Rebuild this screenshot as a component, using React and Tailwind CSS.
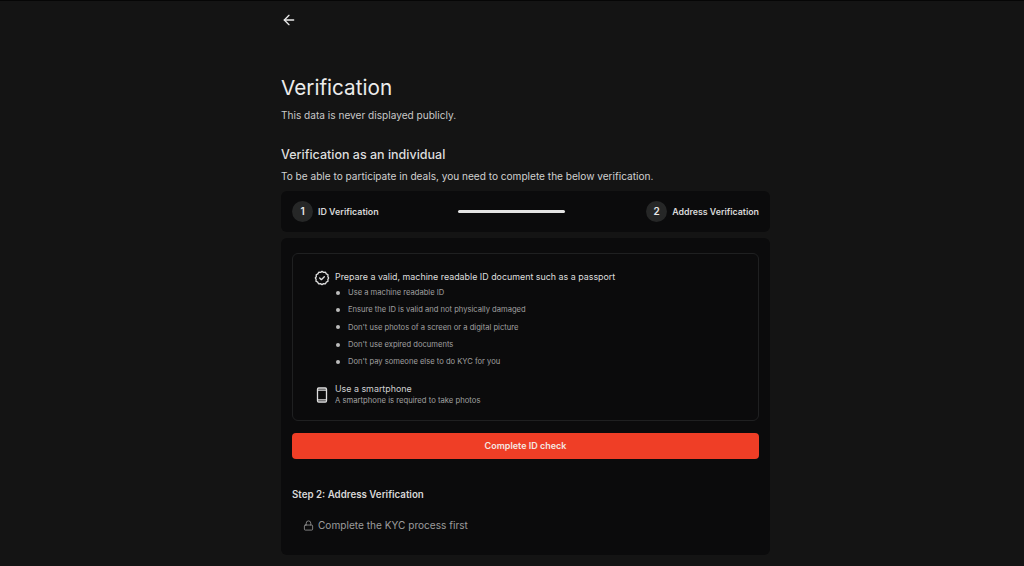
import { ArrowLeft, Lock } from 'lucide-react';

const tips = [
  'Use a machine readable ID',
  'Ensure the ID is valid and not physically damaged',
  "Don't use photos of a screen or a digital picture",
  "Don't use expired documents",
  "Don't pay someone else to do KYC for you",
];

function BadgeCheck() {
  return (
    <svg width="16" height="16" viewBox="0 0 24 24" fill="none" stroke="currentColor" strokeWidth="2" strokeLinecap="round" strokeLinejoin="round" className="shrink-0">
      <path d="M12 2l2.400 1.500 2.800-.2 1.300 2.500 2.500 1.300-.2 2.800L22 12l-1.200 2.100.2 2.800-2.500 1.300-1.300 2.500-2.800-.2L12 22l-2.400-1.500-2.800.2-1.300-2.500-2.500-1.300.2-2.800L2 12l1.500-2.100-.2-2.800 2.500-1.300 1.300-2.500 2.800.2z" />
      <path d="M8.500 12l2.500 2.500 4.500-4.500" />
    </svg>
  );
}

function Phone() {
  return (
    <svg width="16" height="16" viewBox="0 0 16 16" fill="none" stroke="currentColor" className="shrink-0 text-[#dedede]">
      <rect x="3.500" y="1" width="9" height="14" rx="1.200" strokeWidth="1.300" />
      <path d="M3.500 3.200h9M3.500 12.800h9" strokeWidth="1.300" />
    </svg>
  );
}

function StepLabel({ n, label, size }) {
  return (
    <div className="flex items-center gap-[5px]">
      <div className="w-[21px] h-[21px] rounded-full bg-[#262727] flex items-center justify-center text-[10px] font-semibold text-[#e8e8e8]">
        {n}
      </div>
      <span className={`${size} font-semibold text-[#d8d8d8]`}>{label}</span>
    </div>
  );
}

export default function App() {
  return (
    <div className="h-[566px] overflow-hidden bg-[#141414] font-['Inter',sans-serif]">
      <div className="h-px bg-[#060606]" />
      <div className="w-[489px] ml-[281px] pt-[11px]">
        <ArrowLeft size={16} strokeWidth={2} className="text-[#e8e8e8]" />

        <h1 className="mt-[46px] text-[20.700px] leading-[28px] text-[#ececec]">Verification</h1>
        <p className="mt-[5px] text-[10.100px] leading-[16px] text-[#c8c8c8]">This data is never displayed publicly.</p>

        <h2 className="mt-[23px] text-[12.500px] leading-[18px] font-medium text-[#dedede]">Verification as an individual</h2>
        <p className="mt-[4px] text-[10.080px] leading-[16px] text-[#d0d0d0]">
          To be able to participate in deals, you need to complete the below verification.
        </p>

        <div className="mt-[7px] h-[41px] rounded-md bg-[#0b0b0c] flex items-center justify-between px-[11px]">
          <StepLabel n="1" label="ID Verification" size="text-[8.900px]" />
          <div className="w-[107px] h-[3px] rounded-full bg-[#e4e4e4] mr-[2px]" />
          <StepLabel n="2" label="Address Verification" size="text-[8.800px]" />
        </div>

        <div className="mt-[6px] h-[317px] rounded-md bg-[#0b0b0c] px-[11px] pt-[15px]">
          <div className="h-[168px] rounded-md border border-[#1f2021] pl-[21px] pt-[16px]">
            <div className="flex items-start gap-[5px] text-[#dedede]">
              <BadgeCheck />
              <div>
                <p className="text-[8.900px] leading-[14px]">Prepare a valid, machine readable ID document such as a passport</p>
                <ul>
                  {tips.map(tip => (
                    <li key={tip} className="flex items-center h-[17.300px] text-[7.600px] text-[#a0a0a0]">
                      <span className="w-[4px] h-[4px] rounded-full bg-[#bdbdbd] ml-[1px] mr-[8px]" />
                      {tip}
                    </li>
                  ))}
                </ul>
              </div>
            </div>
            <div className="flex items-center gap-[5px] mt-[13px]">
              <Phone />
              <div>
                <p className="text-[8.900px] leading-[12px] text-[#d0d0d0]">Use a smartphone</p>
                <p className="text-[7.700px] leading-[12px] text-[#a0a0a0]">A smartphone is required to take photos</p>
              </div>
            </div>
          </div>

          <button className="mt-[12px] w-full h-[26px] rounded-[4px] bg-[#ef3e26] text-[9px] font-semibold text-[#f4e6e2]">
            Complete ID check
          </button>

          <h3 className="mt-[28px] text-[9.750px] leading-[16px] font-semibold text-[#d8d8d8]">Step 2: Address Verification</h3>

          <div className="mt-[14px] ml-[11px] flex items-center gap-[4px] text-[#9c9c9c]">
            <Lock size={11} strokeWidth={1.75} />
            <span className="text-[10.100px] leading-[16px]">Complete the KYC process first</span>
          </div>
        </div>
      </div>
    </div>
  );
}
